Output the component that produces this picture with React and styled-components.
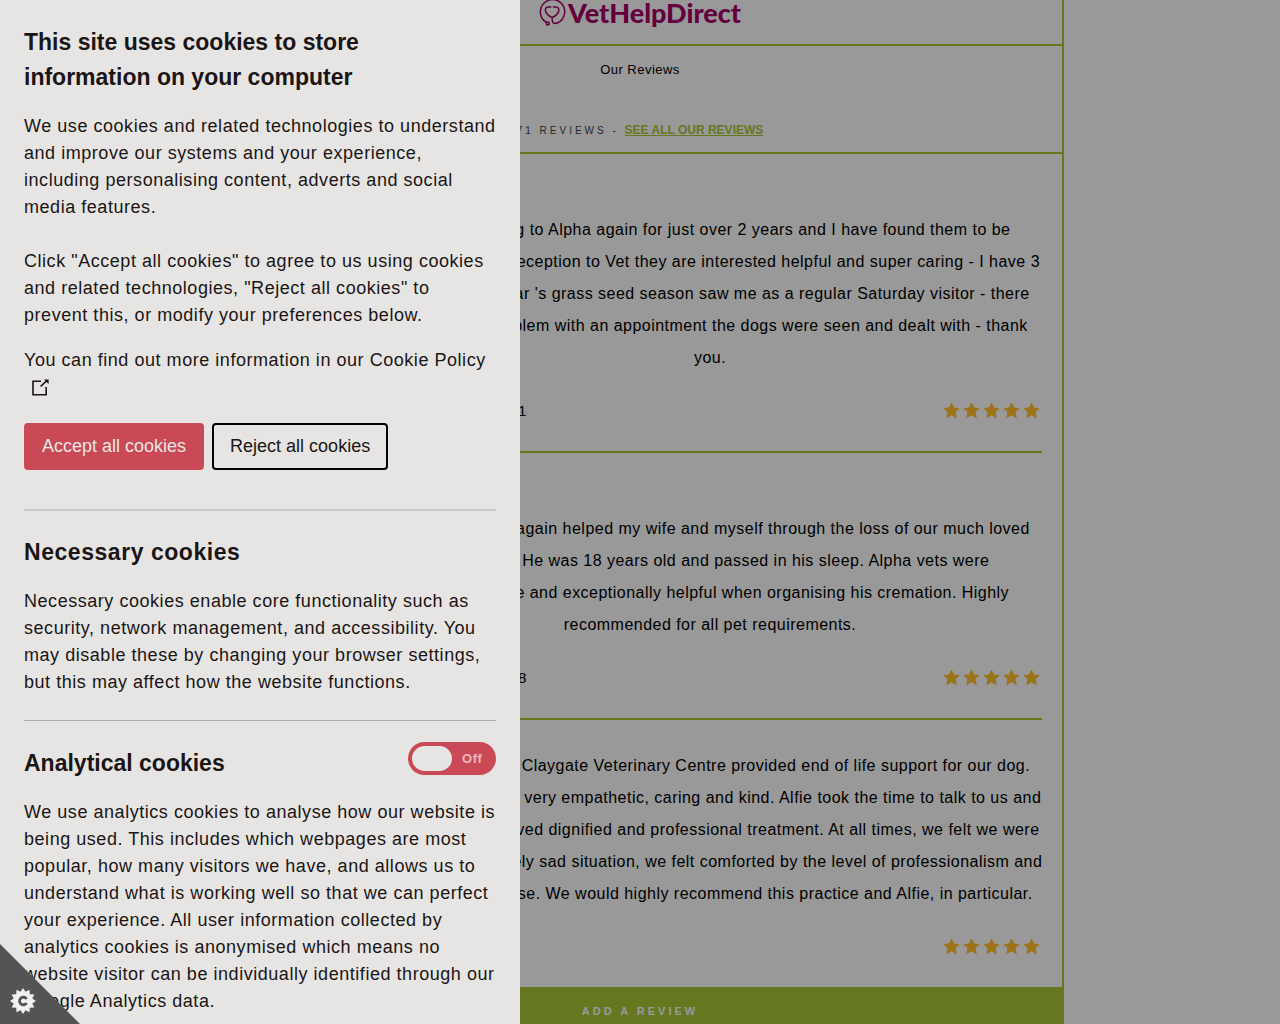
import React, { useState } from "react";
import styled, { createGlobalStyle } from "styled-components";

const GREEN = "#a9c734";
const RED = "#ca4957";

const GlobalStyle = createGlobalStyle`
  * { box-sizing: border-box; }
  html, body { margin: 0; height: 100%; overflow: hidden; }
  body {
    background: #fff;
    color: #000;
    font-family: "Liberation Sans", Arial, sans-serif;
    font-size: 16px;
    letter-spacing: 0.03em;
  }
  h1, h2, p { margin: 0; }
`;

const Page = styled.div`
  max-width: 848px;
  margin: 0 auto;
`;

const Header = styled.header`
  display: flex;
  justify-content: center;
  border: 2px solid ${GREEN};
  border-top: 0;
  padding-bottom: 18px;
`;

const Logo = styled.a`
  display: flex;
  align-items: center;
  gap: 2px;
  height: 26px;
  color: #a90068;
  font: 900 27px/26px Lato, sans-serif;
  letter-spacing: normal;
  text-decoration: none;
`;

const Body = styled.main`
  border: 2px solid ${GREEN};
  border-top: 0;
`;

const Intro = styled.div`
  display: flex;
  flex-direction: column;
  align-items: center;
  gap: 43px;
  padding: 15px 20px 13px;
  border-bottom: 2px solid ${GREEN};
`;

const IntroTitle = styled.p`
  font-size: 13px;
  line-height: 18px;
`;

const Count = styled.p`
  color: #444;
  font-size: 10px;
  line-height: 16px;
  letter-spacing: 3px;
`;

const AllLink = styled.a`
  color: ${GREEN};
  font-size: 12px;
  font-weight: bold;
  letter-spacing: normal;
`;

const Review = styled.article`
  margin: 0 20px;
  padding: ${(p) => (p.$titled ? 60 : 30)}px 0 25px 140px;
  border-bottom: ${(p) => (p.$last ? 0 : 2)}px solid ${GREEN};
`;

const ReviewText = styled.p`
  line-height: 32px;
  text-align: center;
  white-space: pre;
`;

const Meta = styled.div`
  display: flex;
  justify-content: space-between;
  align-items: center;
  height: 32px;
  margin-top: 20px;
  font-size: 15px;
`;

const Stars = styled.span`
  display: flex;
  color: #ffc12b;
`;

const AddButton = styled.button`
  display: block;
  width: 100%;
  height: 48px;
  border: 0;
  background: ${GREEN};
  color: #fff;
  font: bold 11px "Liberation Sans", Arial, sans-serif;
  letter-spacing: 3px;
`;

const Shade = styled.div`
  position: fixed;
  inset: 0;
  background: rgba(0, 0, 0, 0.4);
`;

const Panel = styled.aside`
  position: fixed;
  inset: 0 auto 0 0;
  width: 520px;
  max-width: 100%;
  padding: 25px 24px;
  overflow: hidden;
  background: #e6e5e3;
  color: #1b1515;
  font-size: 18px;
  line-height: 27px;
  letter-spacing: 0.03em;
`;

const PanelTitle = styled.h1`
  margin-bottom: 18px;
  padding-right: 96px;
  font-size: 23px;
  line-height: 35px;
  letter-spacing: normal;
`;

const SectionTitle = styled.h2`
  font-size: 23px;
  line-height: 36px;
  letter-spacing: ${(p) => (p.$plain ? "normal" : "inherit")};
`;

const Copy = styled.p`
  margin-bottom: ${(p) => p.$gap || 0}px;
`;

const PolicyLink = styled.a`
  color: inherit;
  text-decoration: none;

  svg {
    margin-left: 8px;
    vertical-align: -3px;
  }
`;

const Actions = styled.div`
  display: flex;
  gap: 8px;
  margin: 22px 0 39px;
`;

const Button = styled.button`
  height: 47px;
  padding: 0 16px;
  border: 2px solid ${(p) => (p.$primary ? RED : "#000")};
  border-radius: 4px;
  background: ${(p) => (p.$primary ? RED : "transparent")};
  color: ${(p) => (p.$primary ? "#e6e5e3" : "#1b1515")};
  font: 18px "Liberation Sans", Arial, sans-serif;
`;

const Section = styled.section`
  padding: ${(p) => (p.$first ? 23 : 24)}px 0 24px;
  border-top: ${(p) => (p.$first ? "2px solid #cbcac8" : "1px solid #b0afad")};
`;

const SectionHead = styled.div`
  display: flex;
  justify-content: space-between;
  align-items: flex-start;
  margin-bottom: 18px;
`;

const Toggle = styled.label`
  display: flex;
  align-items: center;
  flex-direction: ${(p) => (p.$on ? "row-reverse" : "row")};
  gap: 10px;
  width: 88px;
  height: 33px;
  margin-top: -3px;
  padding: 4px;
  border-radius: 17px;
  background: ${RED};
  color: #edb6ba;
  font-size: 13px;
  font-weight: bold;
  cursor: pointer;
`;

const ToggleInput = styled.input`
  appearance: none;
  width: 40px;
  height: 25px;
  margin: 0;
  border-radius: 13px;
  background: #e6e5e3;
`;

const Corner = styled.button`
  position: fixed;
  left: 0;
  bottom: 0;
  display: flex;
  align-items: flex-end;
  width: 80px;
  height: 80px;
  padding: 10px;
  border: 0;
  background: #545454;
  clip-path: polygon(0 0, 100% 100%, 0 100%);
`;

const LogoMark = () => (
  <svg width="27" height="28" viewBox="0 0 27 28" fill="none" stroke="currentColor" strokeWidth="1.5" strokeLinecap="round" aria-hidden="true">
    <path d="M7.5 23.4A12.2 12.2 0 1 1 23 20.5C20.5 23.8 16.2 25.4 14 23.6C13 22.5 13.1 20.5 13.1 18.4" />
    <path d="M11.8 8H9.2C6.6 8 6 10.2 6.5 12C7.2 14.8 10.5 17.4 13.1 18.4C15.7 17.4 19 14.8 19.7 12C20.2 10.2 19.6 8 17 8H14.5" />
    <circle cx="8.8" cy="24.5" r="1.5" />
  </svg>
);

const External = () => (
  <svg width="17" height="17" viewBox="0 0 17 17" fill="none" stroke="currentColor" strokeWidth="1.6" aria-hidden="true">
    <path d="M9 2.2H1V15.8H14.2V8" />
    <path d="M8.5 7.5L14.6 1.8" />
    <path d="M12 0.4H16.6V5Z" fill="currentColor" stroke="none" />
  </svg>
);

const Star = () => (
  <svg width="20" height="20" viewBox="0 0 20 20" fill="currentColor" stroke="currentColor" strokeLinejoin="round" aria-hidden="true">
    <path d="M9.5 3L11.6 8L17 8.5L13 12L14.2 17.5L9.5 14.7L4.8 17.5L6 12L2 8.5L7.4 8Z" />
  </svg>
);

const gearPoints = Array.from({ length: 24 }, (_, i) => {
  const radius = i % 2 ? 9.6 : 13;
  const angle = (i * Math.PI) / 12;
  return `${13 + radius * Math.cos(angle)},${13 + radius * Math.sin(angle)}`;
}).join(" ");

const Gear = () => (
  <svg width="26" height="26" viewBox="0 0 26 26" aria-hidden="true">
    <polygon points={gearPoints} fill="#f1f1f0" />
    <path d="M16.6 11A3.8 3.8 0 1 0 16.6 15" fill="none" stroke="#545454" strokeWidth="2.8" />
  </svg>
);

const reviews = [
  {
    titled: true,
    date: "November 15th 2021",
    lines: [
      "I've been going to Alpha again for just over 2 years and I have found them to be",
      "excellent ... from reception to Vet they are interested helpful and super caring - I have 3",
      "dogs and last year 's grass seed season saw me as a regular Saturday visitor - there",
      "was never a problem with an appointment the dogs were seen and dealt with - thank",
      "you.",
    ],
  },
  {
    titled: true,
    date: "November 14th 2018",
    lines: [
      "Alpha vets once again helped my wife and myself through the loss of our much loved",
      "cat Charlie. He was 18 years old and passed in his sleep. Alpha vets were",
      "compassionate and exceptionally helpful when organising his cremation. Highly",
      "recommended for all pet requirements.",
    ],
  },
  {
    titled: false,
    date: "May 18th 2021",
    lines: [
      "Dr. Alfie from the Claygate Veterinary Centre provided end of life support for our dog.",
      "He was, as always very empathetic, caring and kind. Alfie took the time to talk to us and",
      "our dog also received dignified and professional treatment. At all times, we felt we were",
      "in such an extremely sad situation, we felt comforted by the level of professionalism and",
      "their calm expertise. We would highly recommend this practice and Alfie, in particular.",
    ],
  },
];

export default function App() {
  const [analytics, setAnalytics] = useState(false);

  return (
    <>
      <GlobalStyle />
      <Page>
        <Header>
          <Logo href="#home"><LogoMark />VetHelpDirect</Logo>
        </Header>
        <Body>
          <Intro>
            <IntroTitle>Our Reviews</IntroTitle>
            <Count>71 REVIEWS - <AllLink href="#reviews">SEE ALL OUR REVIEWS</AllLink></Count>
          </Intro>
          {reviews.map((review, i) => (
            <Review key={review.date} $titled={review.titled} $last={i === reviews.length - 1}>
              <ReviewText>{review.lines.join("\n")}</ReviewText>
              <Meta>
                <span>{review.date}</span>
                <Stars role="img" aria-label="5 out of 5 stars">
                  {[1, 2, 3, 4, 5].map((n) => <Star key={n} />)}
                </Stars>
              </Meta>
            </Review>
          ))}
          <AddButton type="button">ADD A REVIEW</AddButton>
        </Body>
      </Page>

      <Shade />

      <Panel aria-label="Cookie preferences">
        <PanelTitle>This site uses cookies to store information on your computer</PanelTitle>
        <Copy $gap={27}>
          We use cookies and related technologies to understand and improve our systems and your
          experience, including personalising content, adverts and social media features.
        </Copy>
        <Copy $gap={18}>
          Click "Accept all cookies" to agree to us using cookies and related technologies, "Reject
          all cookies" to prevent this, or modify your preferences below.
        </Copy>
        <Copy>
          You can find out more information in our{" "}
          <PolicyLink href="#cookie-policy">Cookie Policy <External /></PolicyLink>
        </Copy>
        <Actions>
          <Button type="button" $primary>Accept all cookies</Button>
          <Button type="button">Reject all cookies</Button>
        </Actions>
        <Section $first>
          <SectionHead>
            <SectionTitle>Necessary cookies</SectionTitle>
          </SectionHead>
          <Copy>
            Necessary cookies enable core functionality such as security, network management, and
            accessibility. You may disable these by changing your browser settings, but this may
            affect how the website functions.
          </Copy>
        </Section>
        <Section>
          <SectionHead>
            <SectionTitle $plain id="analytical">Analytical cookies</SectionTitle>
            <Toggle $on={analytics}>
              <ToggleInput
                type="checkbox"
                role="switch"
                aria-labelledby="analytical"
                checked={analytics}
                onChange={(e) => setAnalytics(e.target.checked)}
              />
              {analytics ? "On" : "Off"}
            </Toggle>
          </SectionHead>
          <Copy>
            We use analytics cookies to analyse how our website is being used. This includes which
            webpages are most popular, how many visitors we have, and allows us to understand what
            is working well so that we can perfect your experience. All user information collected
            by analytics cookies is anonymised which means no website visitor can be individually
            identified through our Google Analytics data.
          </Copy>
        </Section>
      </Panel>

      <Corner type="button" aria-label="Cookie Control"><Gear /></Corner>
    </>
  );
}
